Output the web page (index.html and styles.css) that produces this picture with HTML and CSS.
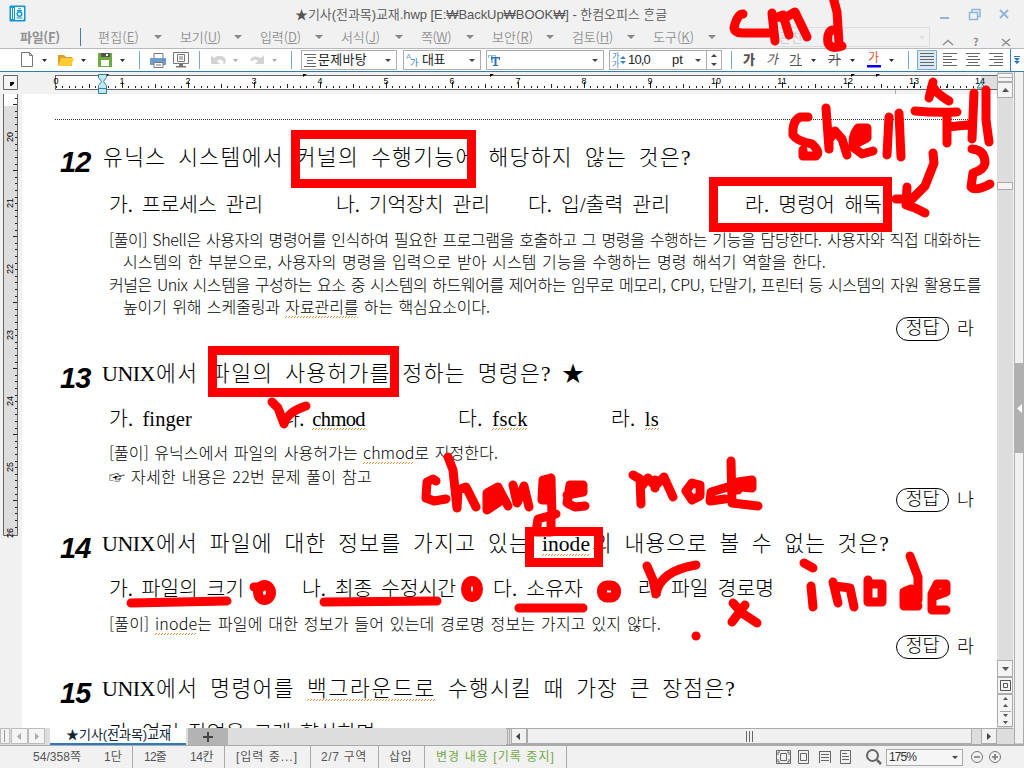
FILE: index.html
```html
<!DOCTYPE html>
<html lang="ko">
<head>
<meta charset="utf-8">
<title>기사(전과목)교재.hwp</title>
<link rel="stylesheet" href="styles.css">
</head>
<body>
<div class="app">
  <header class="titlebar">
    <svg class="logo" width="17" height="17" viewBox="0 0 17 17"><rect x=".5" y=".5" width="16" height="16" rx="1" fill="#0b96d4"/><path d="M2.5 3v11M4.500 3v11" stroke="#fff"/><path d="M6 2h8l1 1v11l-1 1H6z" fill="#fff"/><circle cx="10.500" cy="9" r="2.300" fill="none" stroke="#0b96d4" stroke-width="1.500"/><path d="M8 5.500h5M9 3.800h3M7.500 13h6" stroke="#0b96d4"/></svg>
    <span class="title" data-w="372">★기사(전과목)교재.hwp [E:₩BackUp₩BOOK₩] - 한컴오피스 ᄒᆞᆫ글</span>
    <svg class="winbtns" width="84" height="24" viewBox="940 0 84 24" fill="none" stroke="#8fb6d9" stroke-width="1.500"><path d="M940 17h9" stroke-width="2"/><path d="M969.500 11.500h8v7h-8zM972 11V8.500h8v7h-2.500"/><path d="M1000 9l8 8M1008 9l-8 8" stroke-width="2"/></svg>
  </header>
  <nav class="menubar">
    <b class="file"><span data-w="40">파일(<u>F</u>)</span></b>
    <i class="bar"></i>
    <div class="menu m82"><span data-w="41">편집(<u>E</u>)</span><i class="dd"></i></div>
    <div class="menu m80"><span data-w="41">보기(<u>U</u>)</span><i class="dd"></i></div>
    <div class="menu m81"><span data-w="41">입력(<u>D</u>)</span><i class="dd"></i></div>
    <div class="menu m80"><span data-w="39">서식(<u>J</u>)</span><i class="dd"></i></div>
    <div class="menu m71"><span data-w="30">쪽(<u>W</u>)</span><i class="dd"></i></div>
    <div class="menu m80"><span data-w="41">보안(<u>R</u>)</span><i class="dd"></i></div>
    <div class="menu m81"><span data-w="41">검토(<u>H</u>)</span><i class="dd"></i></div>
    <div class="menu m81"><span data-w="41">도구(<u>K</u>)</span><i class="dd"></i></div>
    <div class="search"><span>관찬</span><i class="dd"></i></div>
    <svg width="84" height="22" viewBox="940 26 84 22" fill="none" stroke="#8c8c8c" stroke-width="1.400"><path d="M943 45l5-4.500 5 4.500M1002 39l8 7M1010 39l-8 7"/><text x="973" y="46" font-size="11" font-weight="700" fill="#8c8c8c" stroke="none">?</text></svg>
  </nav>
  <div class="toolbar">
    <svg width="301" height="22" viewBox="0 49 301 22">
      <path d="M21.500 52.500h8l3 3v11h-11zM29.500 52.500v3h3" fill="#fff" stroke="#777"/>
      <g fill="#333"><path d="M42 59h5l-2.500 3zM81 59h5l-2.500 3zM120 59h5l-2.500 3z"/><path d="M233 59h5l-2.500 3zM272 59h5l-2.500 3z" fill="#aaa"/></g>
      <path d="M58 55h6l2 2h6v9H58z" fill="#e09a33"/><path d="M61 58h13l-3 8H58z" fill="#ffcc33"/>
      <path d="M98 53h14v14H98z" fill="#6cab3c"/><path d="M101 53h9v4h-9z" fill="#555"/><path d="M106 54h2v2h-2zM101 60h8v6h-8z" fill="#fff"/>
      <path d="M139.500 51v18M199.500 51v18M291.500 51v18" stroke="#79a9d6"/>
      <path d="M154 53.500h9v5h-9z" fill="#fff" stroke="#777"/><path d="M150 58h16v7h-16z" fill="#6e9dcb"/><path d="M154 62.500h9v5h-9z" fill="#fff" stroke="#777"/><path d="M156 65h5M162 60h2" stroke="#777"/>
      <path d="M173.500 52.500h15v11h-15z" fill="#fff" stroke="#777"/><path d="M177.500 54.500h7v7h-7zM179 57h4M179 59h4" fill="none" stroke="#777"/><path d="M179 64h4v2h-4zM176 66h10v1.500h-10z" fill="#777"/>
      <path d="M211 55v9h9l-3-3q3-3 6 0q1 1 0 3h2q3-9-7-8q-2 0-4 2z" fill="#d2d2d2"/><path d="M264 55v9h-9l3-3q-3-3-6 0l-2-1q3-6 11-2z" fill="#d2d2d2"/>
    </svg>
    <div class="combo c1"><svg width="16" height="18" viewBox="0 0 16 18" stroke="#666"><path d="M2 3.500h12M5 6.500h9M5 9.500h6M5 12.500h9M2 15.500h12"/></svg><span data-w="49">문제바탕</span><i class="dd dk"></i></div>
    <div class="combo c2"><svg width="18" height="18" viewBox="0 0 18 18" fill="#3b83c9"><text x="2" y="8" font-size="8" opacity=".7">A</text><text x="6" y="15" font-size="9">가</text></svg><span data-w="23">대표</span><i class="dd dk"></i></div>
    <div class="combo c3"><svg width="18" height="18" viewBox="0 0 18 18"><path d="M1 4h8v3H8V5H6v7H4V5H2v2H1z" fill="#93bee5"/><path d="M4 6h9v3h-1V7.500H9.500V14H11v1H6v-1h1.500V7.500H5V9H4z" fill="#2974bb"/></svg><i class="dd dk"></i></div>
    <div class="combo c4"><svg width="18" height="18" viewBox="0 0 18 18" fill="#3b83c9"><text x="2" y="8" font-size="8">가</text><text x="2" y="16" font-size="8">가</text><path d="M10 8l3-3 3 3zM10 10l3 3 3-3z"/></svg><span data-w="22">10,0</span><span class="pt">pt</span><i class="dd dk"></i></div>
    <div class="spin"><i class="dd dk up"></i><i class="dd dk"></i></div>
    <svg class="fmt" width="303" height="22" viewBox="721 49 303 22">
      <path d="M730.500 51v18M907.500 51v18" stroke="#79a9d6"/>
      <g font-size="13" fill="#555"><text x="742" y="64" font-weight="900">가</text><text x="0" y="0" transform="translate(765 64) skewX(-12)">가</text><text x="788" y="64">가</text><text x="827" y="64">가</text><text x="867" y="62" fill="#e2532a" font-size="12">가</text></g>
      <path d="M789 65.500h12M827 59.500h13" stroke="#555"/><path d="M866 65h14v2.500h-14z" fill="#00f"/>
      <path d="M810 59h5l-2.500 3zM849 59h5l-2.500 3zM888 59h5l-2.500 3z" fill="#333"/>
      <path d="M916.500 50.500h19v19h-19z" fill="#dbe9f5" stroke="#79a9d6"/>
      <path d="M919 53.500h14M919 56.500h14M919 59.500h14M919 62.500h14M919 65.500h14M942 53.500h14M942 56.500h9M942 59.500h14M942 62.500h9M942 65.500h14M965 53.500h14M967 56.500h10M965 59.500h14M967 62.500h10M965 65.500h14M988 53.500h14M993 56.500h9M988 59.500h14M993 62.500h9M988 65.500h14" stroke="#666"/>
      <path d="M1009.500 49v22M1023.500 49v22" stroke="#3d7fbd"/><path d="M1013 56.500h6" stroke="#2e76b8"/><path d="M1013 58h6l-3 3zM1013 61h6l-3 3z" fill="#2e76b8"/>
    </svg>
  </div>
  <main class="work">
    <div class="left">
      <svg class="hruler" width="997" height="22" viewBox="0 72 997 22">
        <path d="M3.500 75.500h14v14h-14z" fill="#f4f4f4" stroke="#666"/><path d="M10 82h4v1.500l-2.500 2.500H10z" fill="#000"/>
        <path d="M55.500 75.500H997M55.500 89.500H997" stroke="#666"/><path d="M56 76h925v13H56z" fill="#fff"/><path d="M981 76h16v13h-16z" fill="#ddd"/><path d="M55.500 75v15" stroke="#666"/>
        <g shape-rendering="crispEdges" stroke="#222"><path d="M55.500 87H981" stroke-width="2" stroke-dasharray="1 5.600"/><path d="M88.500 86H981" stroke-width="4" stroke-dasharray="1 65.050"/><path d="M121.500 85H981" stroke-width="6" stroke-dasharray="1 65.050"/></g>
        <g class="nums" text-anchor="middle"><text x="56" y="84">0</text><text x="122" y="84">1</text><text x="188" y="84">2</text><text x="254" y="84">3</text><text x="320" y="84">4</text><text x="386" y="84">5</text><text x="452" y="84">6</text><text x="518" y="84">7</text><text x="584" y="84">8</text><text x="650" y="84">9</text><text x="716" y="84">10</text><text x="782" y="84">11</text><text x="848" y="84">12</text><text x="914" y="84">13</text><text x="980" y="84">14</text></g>
        <path d="M303 74h4l-4 3zM490 74h4l-4 3zM851 74h4l-4 3zM876 74h4l-4 3zM106 74h3l-3 3z" fill="#000"/>
        <path d="M895.500 90v4" stroke="#aaa"/>
        <path d="M98.500 74.500h8v3l-3 4 3 4v8h-8v-8l3-4-3-4zM98.500 88.500h8" fill="#bfe9f3" stroke="#35809a"/><path d="M977 88l4-6 4 6z" fill="#bfe9f3" stroke="#35809a"/>
      </svg>
      <div class="row">
        <svg class="vruler" width="22" height="634" viewBox="0 94 22 634">
          <path d="M3.500 94v441.500h14V94" fill="#ddd" stroke="#666"/><path d="M4 94h13v12H4z" fill="#fff"/>
          <g shape-rendering="crispEdges" stroke="#222"><path d="M15.500 97.500V533" stroke-width="2" stroke-dasharray="1 5.600"/><path d="M14.500 104V533" stroke-width="4" stroke-dasharray="1 65"/></g>
          <g class="nums"><text transform="translate(13 142) rotate(-90)">20</text><text transform="translate(13 208) rotate(-90)">21</text><text transform="translate(13 274) rotate(-90)">22</text><text transform="translate(13 340) rotate(-90)">23</text><text transform="translate(13 406) rotate(-90)">24</text><text transform="translate(13 472) rotate(-90)">25</text><text transform="translate(13 538) rotate(-90)">26</text></g>
        </svg>
        <article class="page">
          <div class="rule"></div>
          <h2 class="q first"><b class="no">12</b><span class="u1" data-w="589">유닉스 시스템에서 커널의 수행기능에 해당하지 않는 것은?</span></h2>
          <div class="ch a"><span data-w="154">가. 프로세스 관리</span><span data-w="154">나. 기억장치 관리</span><span data-w="142">다. 입/출력 관리</span><span data-w="137">라. 명령어 해독</span></div>
          <p class="ex"><span data-w="872">[풀이] Shell은 사용자의 명령어를 인식하여 필요한 프로그램을 호출하고 그 명령을 수행하는 기능을 담당한다. 사용자와 직접 대화하는</span></p>
          <p class="ex in"><span data-w="703">시스템의 한 부분으로, 사용자의 명령을 입력으로 받아 시스템 기능을 수행하는 명령 해석기 역할을 한다.</span></p>
          <p class="ex"><span data-w="872">커널은 Unix 시스템을 구성하는 요소 중 시스템의 하드웨어를 제어하는 임무로 메모리, CPU, 단말기, 프린터 등 시스템의 자원 활용도를</span></p>
          <p class="ex in"><span data-w="367">높이기 위해 스케줄링과 <em>자료관리를</em> 하는 핵심요소이다.</span></p>
          <div class="ans"><b>정답</b>라</div>
          <h2 class="q g9"><b class="no">13</b><span class="ux" data-w="53">UNIX</span><span data-w="396">에서 파일의 사용허가를 정하는 명령은?</span><span class="star">★</span></h2>
          <div class="ch b"><span data-w="83">가. finger</span><span data-w="84">나. <em>chmod</em></span><span data-w="70">다. <em>fsck</em></span><span data-w="48">라. <em>ls</em></span></div>
          <p class="ex e23"><span data-w="389">[풀이] 유닉스에서 파일의 사용허가는 <em>chmod</em>로 지정한다.</span></p>
          <p class="ex e25"><span data-w="263">☞ 자세한 내용은 22번 문제 풀이 참고</span></p>
          <div class="ans"><b>정답</b>나</div>
          <h2 class="q g7"><b class="no">14</b><span class="ux" data-w="53">UNIX</span><span data-w="374">에서 파일에 대한 정보를 가지고 있는</span><span class="g12" data-w="48"><em>inode</em></span><span class="g2" data-w="298">의 내용으로 볼 수 없는 것은?</span></h2>
          <div class="ch c"><span data-w="135">가. 파일의 크기</span><span data-w="154">나. 최종 수정시간</span><span data-w="90">다. 소유자</span><span data-w="136">라. 파일 경로명</span></div>
          <p class="ex e25"><span data-w="552">[풀이] <em>inode</em>는 파일에 대한 정보가 들어 있는데 경로명 정보는 가지고 있지 않다.</span></p>
          <div class="ans"><b>정답</b>라</div>
          <h2 class="q g6"><b class="no">15</b><span class="ux" data-w="53">UNIX</span><span data-w="139">에서 명령어를</span><span class="g12" data-w="129"><em>백그라운드로</em></span><span class="g12" data-w="288">수행시킬 때 가장 큰 장점은?</span></h2>
          <div class="ch last"><span data-w="266">가. 여러 작업을 크게 향상하며</span></div>
        </article>
      </div>
    </div>
    <svg class="vscroll" width="27" height="656" viewBox="997 72 27 656">
      <path d="M997 72h16v656h-16z" fill="#ddd"/><path d="M1013 72h11v656h-11z" fill="#f1f1f1"/><path d="M1014.500 72v656M1023.500 72v656" stroke="#b0b0b0"/>
      <g fill="#f4f4f4" stroke="#aaa"><path d="M997.500 73.500h15v8h-15zM997.500 82.500h15v15h-15zM997.500 182.500h15v7h-15zM997.500 660.500h15v16h-15zM997.500 677.500h15v16h-15zM997.500 694.500h15v32h-15zM999 77.500h13M1000 711.500h11"/></g>
      <g fill="#555"><path d="M1002 92h7l-3.500-4zM1002 667h7l-3.500 4zM1003 700h5l-2.500-3zM1003 707h5l-2.500-3zM1003 714h5l-2.500 3zM1003 721h5l-2.500 3z"/><path d="M1000.500 680.500h10v10h-10zM1003.500 683.500h4v4h-4z" fill="none" stroke="#555"/></g>
      <path d="M1014 363h10v90h-10z" fill="#b0b0b0"/><path d="M1022 404v9l-5-4.500z" fill="#fff"/>
    </svg>
  </main>
  <div class="tabs">
    <svg width="50" height="17" viewBox="0 0 50 17"><path d="M.5.500h9v15h-9zM11.500.500h16v15h-16zM28.500.500h16v15h-16z" fill="#f4f4f4" stroke="#bbb"/><path d="M4.500 2v12" stroke="#999" stroke-width="1"/><path d="M21 5v7l-4-3.500zM35 5v7l4-3.500z" fill="#aaa"/></svg>
    <div class="tab"><span data-w="105">★기사(전과목)교재</span></div>
    <div class="plus"><svg width="10" height="10" stroke="#444" stroke-width="2"><path d="M0 5h10M5 0v10"/></svg></div>
    <svg class="hs" width="518" height="17" viewBox="506 0 518 17"><path d="M506 0h518v17H506z" fill="#ddd"/><path d="M506 .5h507M507.500 1v15M509.500 1v15M506 16.500h518" stroke="#aaa" fill="none"/><path d="M511.500.500h15v15h-15zM527.500.500h444v15h-444zM981.500.500h15v15h-15z" fill="#f1f1f1" stroke="#aaa"/><path d="M1014.500-1v17h9V-1" fill="#f1f1f1" stroke="#aaa"/><path d="M520 5v7l-4-3.500zM987 5v7l4-3.500z" fill="#444"/><path d="M746.500 3v11M749.500 3v11M752.500 3v11" stroke="#666"/></svg>
  </div>
  <footer class="status">
    <div class="s1"><span data-w="48">54/358쪽</span><span data-w="18">1단</span></div>
    <div class="s2"><span data-w="22">12줄</span><span data-w="23">14칸</span></div>
    <div class="s3"><span data-w="62">[입력 중...]</span></div>
    <div class="s4"><span data-w="46">2/7 구역</span></div>
    <div class="s5"><span data-w="23">삽입</span></div>
    <div class="s6"><span data-w="119">변경 내용 [기록 중지]</span></div>
    <svg class="views" width="110" height="22" viewBox="774 746 110 22" fill="none" stroke="#666"><path d="M776.500 750.500h14v13h-14zM780.500 753.500h6v7h-6zM778 755v-3h2M789 755v-3h-2M778 759v3h2M789 759v3h-2M798.500 750.500h10v13h-10zM800.500 753.500h6v7h-6zM819 751.500h12M821 754.500h8M821 757.500h8M821 760.500h8M819.500 751v12M830.500 751v12M840.500 750.500h10v13h-10zM842 753.500h5M842 756.500h7M842 759.500h7"/><circle cx="872.500" cy="755.500" r="5.500" stroke-width="2"/><path d="M877 760l4 4" stroke-width="2.500"/></svg>
    <div class="zoom"><span data-w="27">175%</span><i class="dd dk"></i></div>
    <svg class="pm" width="34" height="16" viewBox="966 749 34 16" fill="none" stroke="#777"><circle cx="975" cy="757" r="5.500"/><circle cx="993" cy="757" r="5.500"/><path d="M972 757h6M990 757h6M993 754v6" stroke-width="1.600"/></svg>
  </footer>
  <svg class="ink" width="1024" height="768" viewBox="0 0 1024 768">
    <g class="boxes"><path d="M295.500 134.500h176v49h-176zM713.500 181.500h174v46h-174zM212.500 350.500h182v42h-182zM529.500 531.500h69v31h-69z"/></g>
    <g class="pen">
      <path d="M743 14Q737 14 734 28Q735 33 742 33L773 33M772 13L775 41M773 19L783 15L789 35M783 19L795 12L807 37"/>
      <path d="M833 -3L837 12L839 43M837 30Q826 28 828 43Q831 50 842 46"/>
      <path d="M808 117L800 117Q792 121 793 135Q797 141 812 144Q821 152 816 156L803 156L803 150M826 108L829 149L829 140L835 131L842 139L847 155M853 145L867 138L867 128L858 128Q851 137 854 148L862 154L873 151M858 135H862M889 117L887 155M899 113L901 157"/>
      <path d="M933 82L929 98M933 87Q937 94 949 101M915 111Q935 113 957 112M947 115V143M947 127L968 125M974 93L972 139M986 90V120L989 142M972 149Q985 150 985 163Q984 170 973 173L971 187Q975 192 990 184"/>
      <path d="M933 153L934 163L925 186L912 199H896M907 187L906 205L915 208L925 213"/>
      <path d="M272 402L278 408L284 424Q287 412 306 406"/>
      <path d="M436 481L433 479L427 482L426 498L434 501L446 499M448 457L453 470L457 508L458 490L466 487L476 507M498 487L487 493L487 510L499 502L498 487L508 506M493 494V500M513 485L517 503L524 486L529 507M551 478L543 480L542 500H551M551 478L552 517M547 485V495M556 514L538 519L536 532H551V515M567 495L583 492V485L570 485L567 503L575 507L585 506"/>
      <path d="M633 475L640 479L641 504M641 487L648 478L655 486L664 477L673 497M655 480V488M692 483L686 491L692 500L700 496L700 485ZM725 499L710 501L711 492L731 486L752 488V480L738 482V490M731 461L732 503L758 506"/>
      <path d="M131 603L227 601M324 602L437 601M519 608H583"/>
      <path d="M254 587H262M647 566L653 580L656 594Q660 571 696 565M696 636h.1M733 603L742 613L757 623M745 605L732 622"/>
      <path d="M804 563L813 568M811 586L813 607M833 582L838 603M835 586L850 588L854 607M868 580V602H882V584H868M910 556L918 577L918 600M911 589L904 592V606H918M910 590V600M935 596L946 592V584H937L932 594V610H946"/>
      <g class="dots"><ellipse cx="264.500" cy="592.500" rx="6.500" ry="7.500"/><ellipse cx="472" cy="589" rx="6" ry="8"/><rect x="602" y="585.500" width="14" height="12" rx="5"/></g>
    </g>
  </svg>
</div>
<script src="fit.js"></script>
</body>
</html>
```
FILE: styles.css
```css
* { box-sizing: border-box; }
body { margin: 0; background: #f1f1f1; font-family: "Liberation Sans", "Noto Sans CJK KR", sans-serif; font-size: 12px; color: #555; }
.app { position: relative; width: 1024px; height: 768px; overflow: hidden; display: flex; flex-direction: column; }
[data-w] { white-space: nowrap; flex: none; }
svg { display: block; flex: none; }
em { font-style: normal; background: repeating-linear-gradient(90deg, #e58a3c 0 1px, transparent 1px 3px) bottom / 100% 1px no-repeat, repeating-linear-gradient(90deg, transparent 0 1px, #e58a3c 1px 2px, transparent 2px 3px) 0 calc(100% - 1px) / 100% 1px no-repeat; }
.dd { width: 0; height: 0; border: 4px solid transparent; border-top-color: #888; border-bottom: 0; }
.dk { border-width: 3px 3px 0; border-top-color: #444; }
.up { transform: rotate(180deg); }

.titlebar { height: 26px; display: flex; align-items: center; font-size: 13px; color: #555; }
.logo { margin-left: 9px; }
.title { margin-left: 269px; width: 372px; font-weight: 350; }
.winbtns { margin-left: auto; }

.menubar { height: 22px; display: flex; align-items: center; font-size: 13px; line-height: 18px; color: #929292; font-family: "Noto Sans CJK KR", sans-serif; font-weight: 350; }
.file { width: 60px; padding-left: 20px; font-weight: 700; }
.bar { width: 1px; height: 18px; background: #3d7fbd; margin: 0 17px 0 20px; }
.menu { display: flex; align-items: center; padding-right: 18px; justify-content: space-between; }
.m82 { width: 82px; }
.m80 { width: 80px; }
.m81 { width: 81px; }
.m71 { width: 71px; }
.search { margin-left: 41px; width: 155px; height: 20px; border: 1px solid #ddd; display: flex; align-items: center; justify-content: space-between; padding: 0 4px 0 3px; color: #ccc; }
.search .dd { border-top-color: #ddd; border-width: 3px 3px 0; }
.menubar svg { margin-left: auto; }

.toolbar { height: 24px; border-top: 1px solid #b8b8b8; border-bottom: 1px solid #3579b6; background: #fff; display: flex; align-items: center; color: #222; font-size: 13px; line-height: 18px; }
.combo { height: 20px; border: 1px solid #adadad; display: flex; align-items: center; background: #fff; flex: none; }
.combo .dd { margin: 0 5px 0 auto; }
.c1 { width: 96px; }
.c2 { width: 78px; margin-left: 6px; }
.c3 { width: 118px; margin-left: 5px; }
.c4 { width: 98px; margin-left: 5px; }
.pt { margin-left: 22px; }
.spin { width: 15px; height: 20px; border: 1px solid #adadad; border-left: 0; display: flex; flex-direction: column; align-items: center; justify-content: space-around; flex: none; }

.work { height: 656px; display: flex; }
.left { width: 997px; }
.row { display: flex; height: 634px; }
.nums { font-size: 9px; fill: #000; }
.page { width: 975px; height: 634px; background: #fff; color: #000; overflow: hidden; font-weight: 300; font-family: "Liberation Serif", "Noto Sans CJK KR", serif; }
.rule { height: 26px; margin: 0 29px 0 33px; border-bottom: 1px dotted #333; }
.q { margin: 0; height: 48px; display: flex; align-items: center; padding-left: 38px; font-weight: 300; font-size: 21.5px; word-spacing: 5px; line-height: 30px; }
.no { width: 42px; font: italic 700 29px/30px "Liberation Sans", sans-serif; letter-spacing: -1px; padding-top: 7px; }
.u1 { margin-left: 1px; }
.ux { font-size: 22px; margin-right: 1px; }
.star { margin-left: 10px; font-size: 22px; }
.first { margin-top: 14px; }
.g9 { margin-top: 9px; }
.g7 { margin-top: 8px; }
.g6 { margin-top: 6px; }
.g12 { margin-left: 12px; }
.g2 { margin-left: 2px; }
.ch { height: 42px; display: grid; align-items: center; padding-left: 87px; font-size: 20.5px; line-height: 26px; word-spacing: 4px; }
.a { height: 46px; grid-template-columns: 227px 192px 217px 1fr; }
.b { grid-template-columns: 172px 177px 153px 1fr; }
.c { grid-template-columns: 193px 191px 145px 1fr; }
.last { height: 24px; margin-top: 7px; }
.ex { margin: 0; height: 22.25px; display: flex; align-items: center; padding-left: 87px; font-family: "Noto Sans CJK KR", sans-serif; font-size: 16px; line-height: 20px; word-spacing: 1px; }
.in { padding-left: 101px; }
.e23 { height: 23px; }
.e25 { height: 25px; }
.ans { height: 24px; display: flex; align-items: center; justify-content: flex-end; gap: 8px; padding-right: 23px; font-size: 18.5px; line-height: 24px; }
.ans b { width: 53px; height: 24px; border: 1px solid #000; border-radius: 12px; text-align: center; font-weight: 300; line-height: 21px; }

.tabs { height: 18px; display: flex; background: #ddd; border-bottom: 1px solid #aaa; }
.tab { width: 136px; padding-left: 16px; background: #fff; border-bottom: 2px solid #2e78bd; color: #123; line-height: 13px; font-size: 13px; overflow: hidden; }
.plus { width: 40px; margin-left: 2px; background: #b3b3b3; display: flex; align-items: center; justify-content: center; }
.hs { margin-left: auto; }

.status { height: 22px; display: flex; align-items: center; line-height: 16px; }
.status > div { height: 22px; display: flex; align-items: center; border-right: 1px solid #aaa; }
.status .s1 { width: 133px; padding-left: 33px; gap: 23px; }
.status .s2 { width: 92px; padding-left: 11px; gap: 24px; }
.status .s3 { width: 86px; padding-left: 11px; }
.status .s4 { width: 68px; padding-left: 10px; }
.status .s5 { width: 46px; padding-left: 10px; }
.status .s6 { width: 142px; padding-left: 11px; color: #73a845; }
.views { margin-left: 207px; }
.status .zoom { width: 77px; height: 17px; border: 1px solid #aaa; background: #f6f6f6; margin-left: 2px; padding: 0 4px 0 2px; justify-content: space-between; color: #333; }
.pm { margin-left: 5px; }

.ink { position: absolute; left: 0; top: 0; pointer-events: none; }
.ink path { fill: none; stroke: #f00; stroke-width: 9; }
.pen { stroke-linecap: round; stroke-linejoin: round; }
.dots { fill: none; stroke: #f00; stroke-width: 10; }
```
FILE: fit.js
```js
// Spreads each label over its width in pixels by adjusting the tracking.
document.querySelectorAll("[data-w]").forEach(function (el) {
  var target = Number(el.dataset.w);
  el.style.display = "inline-block";
  el.style.width = "max-content";
  var natural = el.getBoundingClientRect().width;
  var count = Array.from(el.textContent).length;
  el.style.letterSpacing = ((target - natural) / count).toFixed(3) + "px";
  el.style.width = target + "px";
});
```
